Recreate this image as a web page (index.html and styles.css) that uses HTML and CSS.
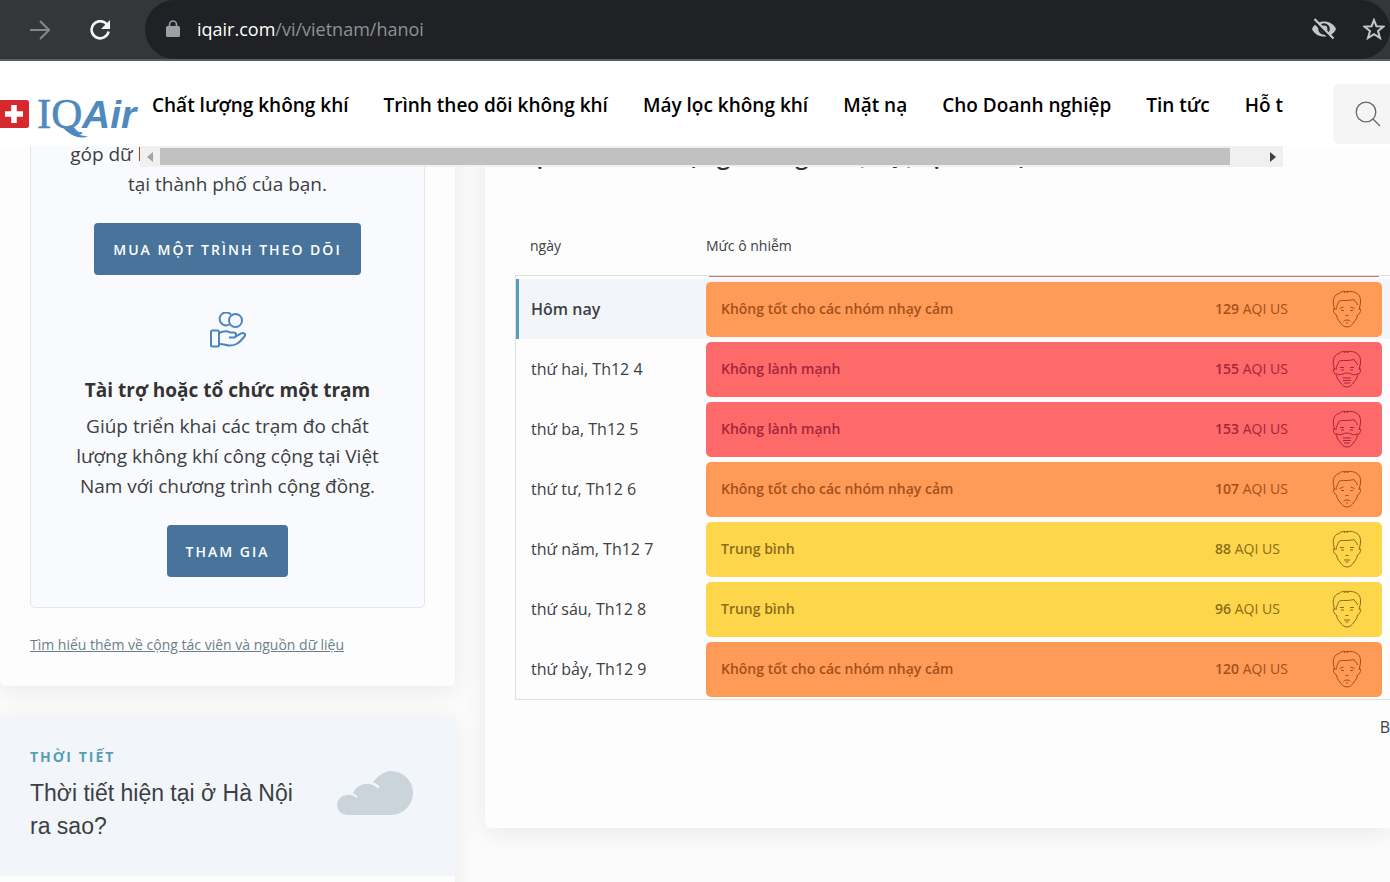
FILE: index.html
```html
<!DOCTYPE html>
<html lang="vi">
<head>
<meta charset="utf-8">
<title>IQAir Hà Nội</title>
<link rel="stylesheet" href="styles.css">
</head>
<body>
<svg class="defs" aria-hidden="true">
  <defs>
    <g id="head">
      <path d="M3 20C0 13 .5 5 7 3.500C9 1.500 11.500 1 13 1.500L12 2.500L15.500 1L15 2.500L18 1.200C25 2 29 5 28.500 12C28.500 15 27.500 17 27 20"/>
      <path d="M4 20C4 16 6 15 6.500 12C8 10 11 10.500 14 10.500C17 10.500 20 10 22 9.500C23 12 25 12 25.500 15"/>
      <path d="M3 18.500C0 17.500 1.500 24 4.500 25C5 28 6 30 8 32C10 35 12 37 15 37C18 37 20 35 22 32C24 30 25 28 25.500 25C28.500 24 30 17.500 27 18.500"/>
    </g>
    <symbol id="face-sad" viewBox="0 0 30 38"><use href="#head"/><path d="M7.500 18.500L11.500 17M22.500 18.500L18.500 17M9 20.500H12M18 20.500H21M13.500 25.500H16.500M11.500 31.500C13 29.500 17 29.500 18.500 31.500M14 33H16"/></symbol>
    <symbol id="face-calm" viewBox="0 0 30 38"><use href="#head"/><path d="M8 17.500H12M18 17.500H22M9 20H12M18 20H21M13.500 25.500H16.500M12 30H18M13.500 32H16.500"/></symbol>
    <symbol id="face-mask" viewBox="0 0 30 38"><use href="#head"/><path d="M8 17.500H12M18 17.500H22M9 20H12M18 20H21M4 23.500C9 26.500 11 23 15 23C19 23 21 26.500 26 23.500M11 28H19M11 30.500H19M12 33H18"/></symbol>
  </defs>
</svg>

<div class="browser">
  <button class="tool" aria-label="Tiến"><svg class="forward" width="20" height="20" viewBox="0 0 20 20"><path d="M0 10H19M10 1L19 10L10 19"/></svg></button>
  <button class="tool reload" aria-label="Tải lại"><svg width="20" height="20" viewBox="0 0 20 20"><path class="ring" d="M17 4.500A8.600 8.600 0 1 0 18.600 11.500"/><path class="tip" d="M20 0V9H11Z"/></svg></button>
  <div class="address">
    <svg width="14" height="18" viewBox="0 0 14 18"><rect x="0" y="6" width="14" height="11" rx="1.500" fill="#9aa0a6"/><path d="M3.500 7V4.500A3.500 3.500 0 0 1 10.500 4.500V7" fill="none" stroke="#9aa0a6" stroke-width="1.600"/></svg>
    <span class="url"><b>iqair.com</b>/vi/vietnam/hanoi</span>
    <button class="tool" aria-label="Theo dõi"><svg width="24" height="22" viewBox="0 0 24 22"><path d="M0 11C4 1 20 1 24 11C20 21 4 21 0 11Z" fill="#c4c7c9"/><circle cx="12" cy="11" r="5.800" fill="#202124"/><circle cx="12" cy="11" r="3.400" fill="#c4c7c9"/><path d="M1.500 3L20 22" stroke="#202124" stroke-width="3"/><path d="M2.500 1L21.500 20.500" stroke="#c4c7c9" stroke-width="2.200"/></svg></button>
    <button class="tool" aria-label="Dấu trang"><svg width="22" height="22" viewBox="0 0 22 22"><path d="M11 2L13.400 8.200L20.500 8.600L15 13L17 20L11 16.200L5 20L7 13L1.500 8.600L8.600 8.200Z" fill="none" stroke="#c4c7c9" stroke-width="2"/></svg></button>
  </div>
</div>

<header class="site">
  <a class="logo" href="#" aria-label="IQAir">
    <svg width="140" height="50" viewBox="0 0 140 50">
      <path d="M0 7H26.500Q29 7 29 9.500V32.500Q29 35 26.500 35H0Z" fill="#d7282f"/>
      <path d="M14 12V30M5 21H23" stroke="#fff" stroke-width="5.500"/>
      <text class="logo-iq" x="37" y="35">IQ</text>
      <text class="logo-air" x="82" y="35">Air</text>
      <path d="M66 34C71 35 74 43 88 43C80 47 71 43 62 34Z" fill="#5089bd"/>
    </svg>
  </a>
  <div class="menu">
    <nav>
      <a href="#">Chất lượng không khí</a><a href="#">Trình theo dõi không khí</a><a href="#">Máy lọc không khí</a><a href="#">Mặt nạ</a><a href="#">Cho Doanh nghiệp</a><a href="#">Tin tức</a><a href="#">Hỗ trợ</a>
    </nav>
    <div class="scrollbar">
      <button aria-label="Cuộn trái"><svg width="6" height="10"><path d="M6 0V10L0 5Z" fill="#a3a3a3"/></svg></button>
      <div class="track"><div class="thumb"></div></div>
      <button aria-label="Cuộn phải"><svg width="6" height="10"><path d="M0 0V10L6 5Z" fill="#404040"/></svg></button>
    </div>
  </div>
  <button class="search" aria-label="Tìm kiếm"><svg width="26" height="26" viewBox="0 0 26 26"><circle cx="11" cy="11" r="9.800"/><path d="M18 18L25 25"/></svg></button>
</header>

<main>
  <div class="side">
    <section class="card contribute">
      <div class="box">
        <p>góp dữ liệu về chất lượng không khí tại thành phố của bạn.</p>
        <button class="cta">MUA MỘT TRÌNH THEO DÕI</button>
        <svg class="hand" width="36" height="36" viewBox="0 0 36 36"><circle cx="25.500" cy="8.500" r="6.500"/><path d="M21 2.600A6.500 6.500 0 1 0 19.500 12.500"/><rect x="1" y="18.500" width="8" height="16" rx="1.500"/><path d="M9 21C14 18.500 17 18.500 20 20.500H24C27 21 26.500 25.500 24 25.500H19M26 24.500L31 21.500C34 20 36.500 22.500 34 25C29 31 26 33.500 20 33.500C16 33.500 13 31.500 9 32"/></svg>
        <h2>Tài trợ hoặc tổ chức một trạm</h2>
        <p>Giúp triển khai các trạm đo chất lượng không khí công cộng tại Việt Nam với chương trình cộng đồng.</p>
        <button class="cta">THAM GIA</button>
      </div>
      <a class="more" href="#">Tìm hiểu thêm về cộng tác viên và nguồn dữ liệu</a>
    </section>
    <section class="card weather">
      <div class="weather-head">
        <div class="weather-text">
          <h3>THỜI TIẾT</h3>
          <p>Thời tiết hiện tại ở Hà Nội ra sao?</p>
        </div>
        <svg width="76" height="44" viewBox="0 0 76 44"><path d="M10 44A10 10 0 0 1 10 24C14 23 17 25 19.500 27L20.500 26C19 23.500 17.500 23 16 22.500C20 12 33 9.500 41 17.500L42.500 16C41 13.500 38.500 12 36 11.500C42 2 51 0 54 0A22 22 0 0 1 54 44Z" fill="#cad4da"/></svg>
      </div>
    </section>
  </div>

  <section class="card forecast">
    <h1>Dự báo chất lượng không khí (AQI) tại Hà Nội</h1>
    <table>
      <thead><tr><th class="day">ngày</th><th>Mức ô nhiễm</th></tr></thead>
      <tbody>
        <tr class="past"><td class="day"></td><td><div class="strip"></div></td></tr>
        <tr class="today"><td class="day">Hôm nay</td><td><div class="level orange"><strong>Không tốt cho các nhóm nhạy cảm</strong><span><b>129</b> AQI US</span><svg><use href="#face-sad"/></svg></div></td></tr>
        <tr><td class="day">thứ hai, Th12 4</td><td><div class="level red"><strong>Không lành mạnh</strong><span><b>155</b> AQI US</span><svg><use href="#face-mask"/></svg></div></td></tr>
        <tr><td class="day">thứ ba, Th12 5</td><td><div class="level red"><strong>Không lành mạnh</strong><span><b>153</b> AQI US</span><svg><use href="#face-mask"/></svg></div></td></tr>
        <tr><td class="day">thứ tư, Th12 6</td><td><div class="level orange"><strong>Không tốt cho các nhóm nhạy cảm</strong><span><b>107</b> AQI US</span><svg><use href="#face-sad"/></svg></div></td></tr>
        <tr><td class="day">thứ năm, Th12 7</td><td><div class="level yellow"><strong>Trung bình</strong><span><b>88</b> AQI US</span><svg><use href="#face-calm"/></svg></div></td></tr>
        <tr><td class="day">thứ sáu, Th12 8</td><td><div class="level yellow"><strong>Trung bình</strong><span><b>96</b> AQI US</span><svg><use href="#face-calm"/></svg></div></td></tr>
        <tr><td class="day">thứ bảy, Th12 9</td><td><div class="level orange"><strong>Không tốt cho các nhóm nhạy cảm</strong><span><b>120</b> AQI US</span><svg><use href="#face-sad"/></svg></div></td></tr>
      </tbody>
    </table>
    <p class="note">B</p>
  </section>
</main>
</body>
</html>
```
FILE: styles.css
```css
* { box-sizing: border-box; margin: 0; }
body {
  display: flex;
  flex-direction: column;
  height: 100vh;
  overflow: hidden;
  background: #fbfbfb;
  color: #3c4043;
  font-family: "Open Sans", "Noto Sans", sans-serif;
}
button { border: 0; padding: 0; background: none; font: inherit; cursor: pointer; }
a { color: inherit; text-decoration: none; }
.defs { position: absolute; width: 0; height: 0; }

.browser {
  display: flex;
  flex: none;
  align-items: center;
  height: 61px;
  padding-left: 30px;
  background: #35363a;
  border-bottom: 2px solid #5c5d5f;
}
.tool { display: flex; flex: none; }
.forward { fill: none; stroke: #85878a; stroke-width: 2; }
.reload { margin: 0 35px 0 40px; }
.ring { fill: none; stroke: #f1f3f4; stroke-width: 2.6; }
.tip { fill: #f1f3f4; }
.address {
  display: flex;
  flex: 1;
  align-items: center;
  height: 59px;
  padding: 0 5px 2px 21px;
  border-radius: 30px;
  background: #202124;
}
.url { flex: 1; margin-left: 17px; font-size: 18px; color: #8e9296; }
.url b { font-weight: 400; color: #fff; }
.address .tool + .tool { margin-left: 27px; }

.site {
  display: flex;
  flex: none;
  position: relative;
  z-index: 2;
  height: 85px;
  background: #fff;
}
.logo { flex: none; width: 140px; padding-top: 32px; }
.logo svg { display: block; overflow: visible; }
.logo-iq { font: 43px "Liberation Serif", serif; fill: #5089bd; stroke: #5089bd; stroke-width: .6; }
.logo-air { font: italic bold 39px "Liberation Sans", sans-serif; fill: #5089bd; }
.menu { flex: 1; min-width: 0; }
nav {
  display: flex;
  gap: 35px;
  height: 85px;
  padding: 30px 0 0 12px;
  overflow: hidden;
  color: #000;
  font-size: 19px;
  font-weight: 600;
  line-height: 28px;
  white-space: nowrap;
}
.scrollbar { display: flex; align-items: center; height: 21px; background: #f0f0f0; }
.scrollbar button { display: flex; flex: none; align-items: center; justify-content: center; width: 20px; height: 21px; }
.track { flex: 1; }
.thumb { width: 97%; height: 17px; background: #c1c1c1; }
.search {
  display: flex;
  flex: none;
  align-items: center;
  width: 57px;
  height: 60px;
  margin: 23px 0 0 50px;
  padding-left: 22px;
  border-radius: 5px 0 0 5px;
  background: #f5f5f5;
}
.search svg { fill: none; stroke: #666; stroke-width: 1.3; }

main { display: flex; flex: 1; align-items: flex-start; gap: 30px; min-height: 0; margin-top: -7px; }
.card { background: #fdfdfd; box-shadow: 0 5px 25px rgba(0, 0, 0, .07); }
.side { display: flex; flex: none; flex-direction: column; gap: 30px; width: 455px; }
.contribute { padding: 0 30px 29px; border-radius: 0 0 5px 5px; }
.box {
  display: flex;
  flex-direction: column;
  align-items: center;
  padding: 0 30px 30px;
  border: 1px solid #e3e5e8;
  border-top: 0;
  border-radius: 0 0 5px 5px;
  background: #f9fafd;
  text-align: center;
}
.box p { font-size: 19px; line-height: 30px; }
.box h2 { font-size: 19px; line-height: 30px; margin: 27px 0 6px; color: #333; white-space: nowrap; }
.cta {
  height: 52px;
  margin-top: 24px;
  padding: 0 19px;
  border-radius: 4px;
  background: #48739b;
  color: #fff;
  font-size: 14px;
  font-weight: 600;
  letter-spacing: 2px;
  white-space: nowrap;
}
.hand { margin-top: 37px; fill: none; stroke: #4a86bd; stroke-width: 2; }
.more { display: block; margin-top: 25px; color: #6b7f8b; font-size: 14px; line-height: 24px; text-decoration: underline; }
.weather { border-radius: 5px; height: 200px; }
.weather-head { display: flex; justify-content: space-between; height: 160px; padding: 29px 42px 0 30px; background: #f2f6fb; }
.weather-text { width: 280px; }
.weather-head svg { margin-top: 26px; }
.weather h3 { color: #559fb5; font-size: 14px; line-height: 24px; letter-spacing: 2px; }
.weather p { margin-top: 8px; font: 23px/33px "Liberation Sans", Arial, sans-serif; }

.forecast { flex: 1; min-width: 0; height: 689px; padding-left: 30px; border-radius: 0 0 0 5px; }
.forecast h1 { height: 77px; font-size: 24px; line-height: 32px; font-weight: 600; color: #333; }
table { width: 100%; border-spacing: 0; }
td, th { padding: 0; text-align: left; }
th { height: 60px; font-size: 14px; font-weight: 400; vertical-align: middle; border-bottom: 1px solid #d9e0e6; }
.day { width: 191px; padding-left: 15px; white-space: nowrap; }
td { height: 60px; vertical-align: top; }
td.day { border-left: 1px solid #d9e0e6; font-size: 16px; vertical-align: middle; }
tbody tr:last-child td { border-bottom: 1px solid #d9e0e6; height: 61px; }
.past td { height: 3px; }
.strip { height: 1px; margin: 0 11px 0 3px; background: #dc7377; }
.today td { background: #f2f6fb; }
.today .day { font-weight: 600; box-shadow: inset 3px 0 #559fb5; }
.level {
  display: flex;
  align-items: center;
  height: 55px;
  margin: 3px 8px 0 0;
  padding: 0 20px 2px 15px;
  border-radius: 5px;
  font-size: 14px;
}
.level strong { flex: 1; font-weight: 600; }
.level span { width: 117px; }
.level b { font-weight: 600; }
.level svg { width: 30px; height: 38px; fill: none; stroke: currentColor; stroke-width: 1; }
.orange { background: #ff9b57; color: #a3501b; }
.red { background: #fe6a69; color: #a5253b; }
.yellow { background: #fdd64b; color: #8c6c1b; }
.note { margin-top: 15px; font-size: 16px; line-height: 24px; text-align: right; }
```
